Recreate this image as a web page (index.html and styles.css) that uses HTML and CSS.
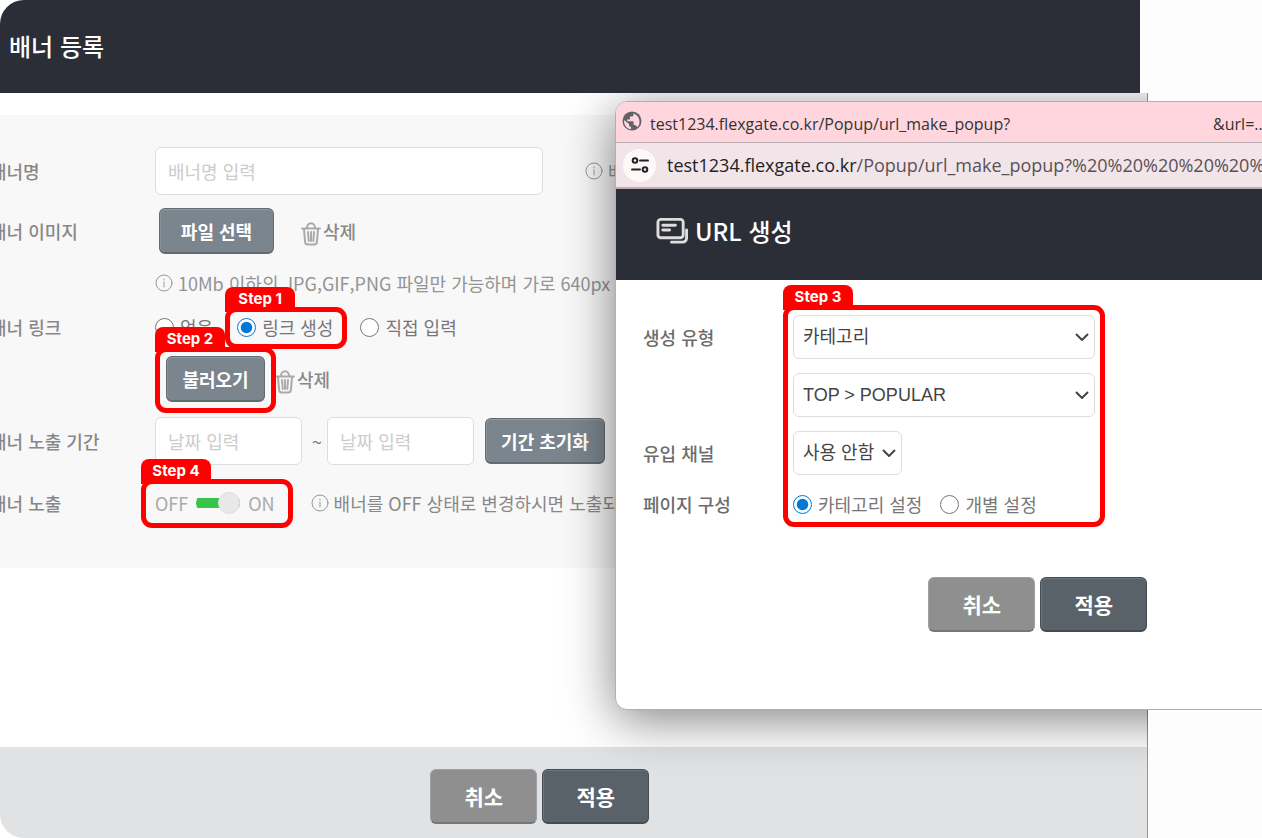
FILE: index.html
```html
<!DOCTYPE html>
<html lang="ko">
<head>
    <meta charset="UTF-8">
    <meta name="viewport" content="width=device-width, initial-scale=1.0">
    <title>배너 등록</title>
    <link rel="stylesheet" href="styles.css">
</head>
<body>
    <div class="desktop">
        <!-- 배너 등록 -->
        <main class="page">
            <header class="page-header">
                <h1>배너 등록</h1>
            </header>
            <form class="banner-form">
                <div class="row">
                    <label class="row-label" for="bannerName">배너명</label>
                    <input class="text-input" type="text" id="bannerName" placeholder="배너명 입력">
                    <p class="hint name-hint">
                        <svg class="info-icon" viewBox="0 0 18 18"><circle cx="9" cy="9" r="8"/><path d="M9 8v5"/><path d="M9 5v1"/></svg>
                        배
                    </p>
                </div>
                <div class="row">
                    <span class="row-label">배너 이미지</span>
                    <button type="button" class="btn btn-file">파일 선택</button>
                    <button type="button" class="delete-btn">
                        <svg class="trash-icon" viewBox="0 0 20 25"><path d="M1 7.500h18M6 7c0-6.500 8-6.500 8 0M3 8l1 12c0 2.500 1 3.500 3 3.500h6c2 0 3-1 3-3.500l1-12M7 11l.7 9M10 11v9M13 11l-.7 9"/></svg>삭제
                    </button>
                </div>
                <div class="row row-small">
                    <p class="hint">
                        <svg class="info-icon" viewBox="0 0 18 18"><circle cx="9" cy="9" r="8"/><path d="M9 8v5"/><path d="M9 5v1"/></svg>
                        10Mb 이하의 JPG,GIF,PNG 파일만 가능하며 가로 640px
                    </p>
                </div>
                <div class="row row-small">
                    <span class="row-label">배너 링크</span>
                    <label class="radio"><input type="radio" name="link">없음</label>
                    <div class="step step-1">
                        <label class="radio"><input type="radio" name="link" checked>링크 생성</label>
                        <div class="step-box"><span class="step-tag">Step 1</span></div>
                    </div>
                    <label class="radio"><input type="radio" name="link">직접 입력</label>
                </div>
                <div class="row">
                    <div class="step step-2">
                        <button type="button" class="btn btn-load">불러오기</button>
                        <div class="step-box"><span class="step-tag">Step 2</span></div>
                    </div>
                    <button type="button" class="delete-btn">
                        <svg class="trash-icon" viewBox="0 0 20 25"><path d="M1 7.500h18M6 7c0-6.500 8-6.500 8 0M3 8l1 12c0 2.500 1 3.500 3 3.500h6c2 0 3-1 3-3.500l1-12M7 11l.7 9M10 11v9M13 11l-.7 9"/></svg>삭제
                    </button>
                </div>
                <div class="row row-date">
                    <span class="row-label">배너 노출 기간</span>
                    <input class="text-input date-input" type="text" placeholder="날짜 입력" aria-label="시작일">
                    <span class="tilde">~</span>
                    <input class="text-input date-input" type="text" placeholder="날짜 입력" aria-label="종료일">
                    <button type="button" class="btn btn-reset">기간 초기화</button>
                </div>
                <div class="row">
                    <span class="row-label">배너 노출</span>
                    <div class="step step-4">
                        <label class="toggle">OFF<input type="checkbox" checked>ON</label>
                        <div class="step-box"><span class="step-tag">Step 4</span></div>
                    </div>
                    <p class="hint strong">
                        <svg class="info-icon" viewBox="0 0 18 18"><circle cx="9" cy="9" r="8"/><path d="M9 8v5"/><path d="M9 5v1"/></svg>
                        배너를 OFF 상태로 변경하시면 노출되
                    </p>
                </div>
            </form>
            <footer class="page-footer">
                <button type="button" class="btn btn-cancel">취소</button>
                <button type="button" class="btn btn-apply">적용</button>
            </footer>
            <div class="popup-shadow"></div>
        </main>

        <!-- URL 생성 팝업 -->
        <section class="popup">
            <div class="title-bar">
                <svg class="globe-icon" viewBox="0 0 20 20"><circle cx="10" cy="10" r="9.500" fill="#5f6368"/><path d="M2 9l5 4v2l2 1v2.300C4.500 17.800 1.800 14 2 9zM11.500 2.200v1.600c0 1-.8 1.800-1.800 1.800H8v1.800c0 .6-.4 1-1 1H5.200v1.800h5.400c.6 0 1 .4 1 1v2.700h.9c.8 0 1.500.5 1.800 1.200l1.300 1c3-3.200 3.200-10.600-4.100-13.900z" fill="#ffd6de"/></svg>
                <span>test1234.flexgate.co.kr/Popup/url_make_popup?</span>
                <span class="title-rest">&amp;url=..</span>
            </div>
            <div class="url-bar">
                <span class="site-info">
                    <svg viewBox="0 0 18 18"><circle cx="4" cy="4.500" r="2.300"/><path d="M9 4.500h8"/><circle cx="14" cy="13.500" r="2.300"/><path d="M1 13.500h8"/></svg>
                </span>
                <span class="url"><b>test1234.flexgate.co.kr</b>/Popup/url_make_popup?%20%20%20%20%20%20%20</span>
            </div>
            <header class="popup-header">
                <svg class="window-icon" viewBox="0 0 34 28"><rect x="2" y="2" width="26" height="19" rx="3"/><path d="M7 8h13M7 13h7M31.500 13v8c0 3-1.500 4.500-4.500 4.500H16"/></svg>
                <h2>URL 생성</h2>
            </header>
            <form class="url-form">
                <div class="labels">
                    <label for="urlType">생성 유형</label>
                    <span></span>
                    <label for="channel">유입 채널</label>
                    <span>페이지 구성</span>
                </div>
                <div class="step step-3">
                    <select class="select" id="urlType"><option>카테고리</option></select>
                    <select class="select" aria-label="카테고리"><option>TOP &gt; POPULAR</option></select>
                    <select class="select select-short" id="channel"><option>사용 안함</option></select>
                    <div class="radios">
                        <label class="radio"><input type="radio" name="config" checked>카테고리 설정</label>
                        <label class="radio"><input type="radio" name="config">개별 설정</label>
                    </div>
                    <div class="step-box"><span class="step-tag">Step 3</span></div>
                </div>
            </form>
            <div class="popup-buttons">
                <button type="button" class="btn btn-cancel">취소</button>
                <button type="button" class="btn btn-apply">적용</button>
            </div>
        </section>
    </div>
</body>
</html>
```
FILE: styles.css
```css
* {
    box-sizing: border-box;
}
body {
    margin: 0;
    font-family: "Noto Sans CJK KR", sans-serif;
    font-size: 18px;
    color: #777;
    background: #fff;
}
h1, h2, p {
    margin: 0;
}
button, input, select {
    font-family: inherit;
    font-size: inherit;
    margin: 0;
}
svg {
    flex: none;
    fill: none;
    stroke-linecap: round;
}
.desktop {
    position: relative;
    display: flex;
    min-height: 100vh;
    overflow: hidden;
    border-radius: 24px 0 0 24px;
    background: #fdfdfd;
}

/* 배너 등록 */
.page {
    position: relative;
    display: flex;
    flex-direction: column;
    flex: none;
    width: calc(91% + 68px);
    margin-left: -68px;
    overflow: hidden;
    background: linear-gradient(to left, #999 1px, #fff 1px);
}
.page-header {
    position: relative;
    z-index: 2;
    display: flex;
    align-items: center;
    height: 93px;
    padding: 0 0 2px 77px;
    background: linear-gradient(to left, #fdfdfd 8px, #2c2e37 8px);
}
.page-header h1, .popup-header h2 {
    font-size: 24px;
    font-weight: 500;
    color: #fff;
}
.banner-form {
    display: flex;
    flex-direction: column;
    gap: 12px;
    margin-top: 22px;
    padding: 32px 0 41px 58px;
    background: #f8f8f8;
    white-space: nowrap;
}
.row {
    display: flex;
    align-items: center;
    height: 48px;
    padding-left: 165px;
}
.row-small {
    height: 32px;
}
.row-date {
    height: 52px;
}
.row-label {
    width: 165px;
    margin-left: -165px;
    font-weight: 500;
    color: #888;
}
.text-input {
    width: 388px;
    height: 48px;
    padding: 0 12px;
    border: 1px solid #ddd;
    border-radius: 6px;
    background: #fff;
}
.text-input::placeholder {
    color: #ccc;
}
.date-input {
    width: 147px;
}
.tilde {
    width: 25px;
    padding-left: 5px;
    text-align: center;
}
.hint {
    display: flex;
    align-items: center;
    gap: 5px;
    color: #949494;
}
.hint.strong {
    margin-left: 36px;
    color: #888;
}
.name-hint {
    margin-left: 42px;
}
.info-icon {
    width: 18px;
    height: 18px;
    stroke: #999;
}
.btn {
    height: 46px;
    padding: 0;
    border: 1px solid #626b72;
    border-bottom-width: 2px;
    border-radius: 6px;
    background: #7b858d;
    box-shadow: inset 0 1px #929aa1, inset 1px 0 #87919a;
    color: #fff;
    font-weight: bold;
}
.btn-file {
    width: 115px;
    margin-left: 4px;
}
.btn-load {
    width: 99px;
}
.btn-reset {
    width: 120px;
    margin-left: 11px;
}
.btn-cancel, .btn-apply {
    width: 107px;
    height: 55px;
    font-size: 21px;
}
.btn-cancel {
    border-color: #a0a0a0 #a0a0a0 #777;
    background: #8f8f8f;
    box-shadow: none;
}
.btn-apply {
    border-color: #454c53;
    background: #5a6269;
    box-shadow: inset 0 1px #6d757c, inset 1px 0 #6d757c;
}
.delete-btn {
    display: flex;
    align-items: center;
    gap: 2px;
    margin-left: 27px;
    padding: 0;
    border: 0;
    background: none;
    color: #888;
    font-weight: 500;
}
.step-2 + .delete-btn {
    margin-left: 10px;
}
.trash-icon {
    width: 20px;
    height: 25px;
    margin-top: 4px;
    stroke: #aaa;
    stroke-width: 2;
}
.radio {
    display: flex;
    align-items: center;
    gap: 6px;
}
.radio input {
    width: 19px;
    height: 19px;
    accent-color: #0078d7;
}
.toggle {
    display: flex;
    align-items: center;
    gap: 8px;
    color: #aaa;
}
.toggle input {
    appearance: none;
    display: flex;
    align-items: center;
    justify-content: flex-end;
    width: 44px;
    height: 20px;
    background: linear-gradient(#35c548, #35c548) center / 44px 10px no-repeat;
    border-radius: 10px;
}
.toggle input::before {
    content: "";
    width: 20px;
    height: 20px;
    border: 1px solid #ddd;
    border-radius: 50%;
    background: #e8e8e8;
}
.page-footer {
    display: flex;
    justify-content: center;
    align-items: center;
    gap: 5px;
    height: 91px;
    margin-top: auto;
    padding-top: 8px;
    border-right: 1px solid #999;
    background: #e1e2e4;
}

/* 단계 표시 */
.step {
    position: relative;
}
.step-box {
    position: absolute;
    border: 5px solid #f00;
    border-radius: 11px;
    pointer-events: none;
}
.step-tag {
    position: absolute;
    left: -5px;
    bottom: 100%;
    width: 70px;
    height: 25px;
    border-radius: 8px 8px 0 0;
    background: #f00;
    color: #fff;
    font: bold 15px/24px Inter, sans-serif;
    text-align: center;
}
.step-1 {
    margin: 0 27px 0 24px;
}
.step-1 .step-box {
    inset: -7px -14px -9px -12px;
}
.step-2 {
    margin-left: 11px;
}
.step-2 .step-box {
    inset: -9px -11px -11px;
}
.step-4 .step-box {
    inset: -11px -18px -12px -14px;
}
.step-3 .step-box {
    inset: -10px -10px -8px;
}

/* URL 생성 팝업 */
.popup, .popup-shadow {
    position: absolute;
    top: 101px;
    border-radius: 12px;
}
.popup-shadow {
    left: 683px;
    width: 67%;
    height: 608px;
    box-shadow: 0 10px 50px rgba(0, 0, 0, 0.5);
}
.popup {
    left: 615px;
    z-index: 3;
    width: 67%;
    overflow: hidden;
    border: 1px solid #b0b0b0;
    background: #fff;
    white-space: nowrap;
}
.title-bar {
    display: flex;
    align-items: center;
    height: 40px;
    padding: 3px 0 0 6px;
    background: #ffd6de;
    color: #333;
    font-family: "Open Sans", sans-serif;
    font-size: 16px;
}
.globe-icon {
    width: 20px;
    height: 20px;
    margin: -6px 8px 0 0;
}
.title-rest {
    margin-left: 203px;
}
.url-bar {
    display: flex;
    align-items: center;
    gap: 11px;
    height: 47px;
    padding-left: 7px;
    border-top: 1px solid #b9aeb3;
    border-bottom: 2px solid #b9aeb3;
    background: #f2e5ea;
    color: #5b5155;
    font-family: "Open Sans", sans-serif;
    font-size: 18px;
}
.url b {
    color: #222;
    font-weight: normal;
}
.site-info {
    display: flex;
    align-items: center;
    justify-content: center;
    width: 33px;
    height: 33px;
    border-radius: 50%;
    background: #fff8f8;
}
.site-info svg {
    width: 18px;
    height: 18px;
    stroke: #222;
    stroke-width: 2;
}
.popup-header {
    display: flex;
    align-items: center;
    gap: 6px;
    height: 91px;
    padding: 0 0 8px 40px;
    background: #2c2e37;
}
.window-icon {
    width: 33px;
    height: 28px;
    stroke: #ddd;
    stroke-width: 3;
}
.url-form {
    display: flex;
    padding: 35px 0 0 27px;
}
.labels, .step-3 {
    display: grid;
    grid-template-rows: 44px 44px 44px 30px;
    align-items: center;
    gap: 14px 0;
}
.labels {
    width: 150px;
    font-weight: 500;
    color: #6c6c6c;
}
.step-3 {
    width: 302px;
}
.select {
    appearance: none;
    width: 100%;
    height: 44px;
    padding: 0 9px;
    border: 1px solid #ddd;
    border-radius: 6px;
    background: #fff url("data:image/svg+xml,%3Csvg xmlns='http://www.w3.org/2000/svg' width='14' height='8' fill='none' stroke='%23444' stroke-width='2'%3E%3Cpath d='M1 1l6 6 6-6'/%3E%3C/svg%3E") right 5px center no-repeat;
    color: #444;
    font-family: "Liberation Sans", "Noto Sans CJK KR", sans-serif;
}
.select-short {
    width: 109px;
}
.radios {
    display: flex;
    gap: 18px;
}
.popup-buttons {
    display: flex;
    justify-content: center;
    gap: 5px;
    padding: 58px 0 77px;
}
```
